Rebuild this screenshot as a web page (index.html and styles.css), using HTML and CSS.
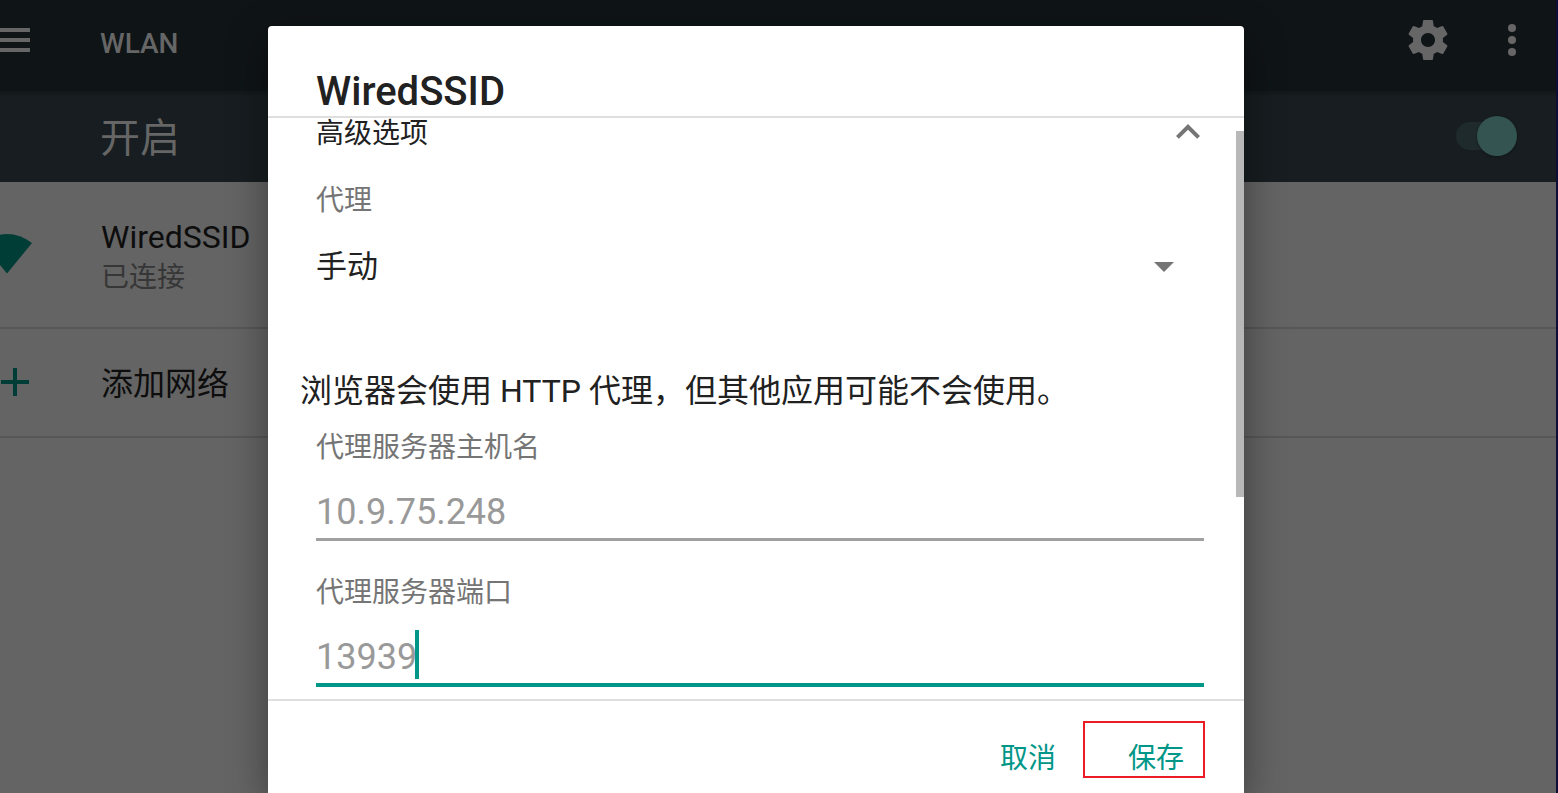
FILE: index.html
```html
<!DOCTYPE html>
<html lang="zh-CN">
<head>
<meta charset="utf-8">
<title>WLAN</title>
<link rel="stylesheet" href="styles.css">
</head>
<body>
<div class="screen">
  <header class="app-bar">
    <button class="icon-button menu" type="button" aria-label="菜单">
      <svg width="30" height="24" viewBox="0 0 30 24"><path d="M0 0h30v4H0zM0 10h30v4H0zM0 20h30v4H0z"/></svg>
    </button>
    <h1 class="app-title">WLAN</h1>
    <button class="icon-button" type="button" aria-label="设置">
      <svg width="48" height="48" viewBox="0 0 24 24"><path d="M19.43 12.98c.04-.32.07-.64.07-.98s-.03-.66-.07-.98l2.11-1.65c.19-.15.24-.42.12-.64l-2-3.46c-.12-.22-.39-.3-.61-.22l-2.49 1c-.52-.4-1.08-.73-1.69-.98l-.38-2.65C14.46 2.18 14.25 2 14 2h-4c-.25 0-.46.18-.49.42l-.38 2.65c-.61.25-1.17.59-1.69.98l-2.49-1c-.23-.09-.49 0-.61.22l-2 3.46c-.13.22-.07.49.12.64l2.11 1.65c-.04.32-.07.65-.07.98s.03.66.07.98l-2.11 1.65c-.19.15-.24.42-.12.64l2 3.46c.12.22.39.3.61.22l2.49-1c.52.4 1.08.73 1.69.98l.38 2.65c.03.24.24.42.49.42h4c.25 0 .46-.18.49-.42l.38-2.65c.61-.25 1.17-.59 1.69-.98l2.49 1c.23.09.49 0 .61-.22l2-3.46c.12-.22.07-.49-.12-.64l-2.11-1.65zM12 15.5c-1.93 0-3.5-1.57-3.5-3.5s1.57-3.5 3.5-3.5 3.5 1.57 3.5 3.5-1.57 3.5-3.5 3.5z"/></svg>
    </button>
    <button class="icon-button" type="button" aria-label="更多选项">
      <svg width="48" height="48" viewBox="0 0 24 24"><circle cx="12" cy="6" r="2"/><circle cx="12" cy="12" r="2"/><circle cx="12" cy="18" r="2"/></svg>
    </button>
  </header>
  <div class="switch-bar">
    <label class="switch-label" for="wlan-switch">开启</label>
    <input class="switch" id="wlan-switch" type="checkbox" checked>
  </div>
  <ul class="networks">
    <li class="network connected">
      <span class="network-icon">
        <svg width="32" height="44" viewBox="0 0 32 44"><path d="M7 39.500L-18 9Q-6 0 7 0T32 9z"/></svg>
      </span>
      <span class="network-text">
        <span class="network-name">WiredSSID</span>
        <span class="network-state">已连接</span>
      </span>
    </li>
    <li class="network">
      <span class="network-icon">
        <svg width="29" height="28" viewBox="0 0 29 28"><path d="M13 0h4v12h12v4H17v12h-4V16H1v-4h12z"/></svg>
      </span>
      <span class="network-text"><span class="network-name">添加网络</span></span>
    </li>
  </ul>
</div>

<div class="overlay">
  <form class="dialog" role="dialog" aria-labelledby="dialog-title">
    <h2 class="dialog-title" id="dialog-title">WiredSSID</h2>
    <div class="dialog-body">
      <button class="advanced" type="button" aria-expanded="true">
        高级选项
        <svg class="chevron" width="24" height="20" viewBox="6 8 12 10"><path d="M12 8l-6 6 1.410 1.410L12 10.830l4.590 4.580L18 14z"/></svg>
      </button>
      <div class="field proxy-field">
        <label class="field-label" for="proxy">代理</label>
        <div class="select-wrap">
          <select class="select" id="proxy"><option>手动</option></select>
          <svg class="arrow" width="20" height="10" viewBox="0 0 20 10"><path d="M0 0h20L10 10z"/></svg>
        </div>
      </div>
      <p class="notice">浏览器会使用 HTTP 代理，但其他应用可能不会使用。</p>
      <div class="field">
        <label class="field-label" for="host">代理服务器主机名</label>
        <input class="text-input" id="host" type="text" value="10.9.75.248">
      </div>
      <div class="field">
        <label class="field-label" for="port">代理服务器端口</label>
        <div class="input-wrap">
          <input class="text-input active" id="port" type="text" value="13939">
          <span class="caret"></span>
        </div>
      </div>
      <span class="scroll-thumb"></span>
    </div>
    <footer class="actions">
      <button class="action" type="button">取消</button>
      <span class="highlighted"><button class="action" type="submit">保存</button></span>
    </footer>
  </form>
</div>
</body>
</html>
```
FILE: styles.css
```css
* { box-sizing: border-box; }

body {
  margin: 0;
  min-height: 100vh;
  overflow: hidden;
  background: #646464;
  color: #0d0d0d;
  font-family: Roboto, "Noto Sans CJK SC", sans-serif;
}

button, input, select {
  margin: 0;
  padding: 0;
  border: 0;
  outline: 0;
  background: none;
  color: inherit;
  font: inherit;
}

svg { display: block; }

.screen {
  min-height: 100vh;
  border-right: 2px solid #0f0d33;
}

.app-bar {
  display: flex;
  align-items: center;
  gap: 36px;
  height: 91px;
  padding: 0 20px 11px 0;
  background: #0f1416;
  color: #666;
}

.icon-button svg { fill: #666; }

.app-title {
  flex: 1;
  margin: 0;
  padding: 7px 0 0 34px;
  font-size: 28px;
  font-weight: 500;
  line-height: 32px;
}

.switch-bar {
  display: flex;
  align-items: center;
  justify-content: space-between;
  height: 91px;
  padding: 0 39px 2px 100px;
  background: linear-gradient(#12181a, #171d20 6px);
}

.switch-label {
  padding-top: 6px;
  color: #666;
  font-size: 40px;
  line-height: 48px;
}

.switch {
  position: relative;
  width: 61px;
  height: 40px;
  appearance: none;
}

.switch::before {
  content: "";
  position: absolute;
  inset: 6px 6px 6px 0;
  border-radius: 14px;
  background: #1e2a2c;
}

.switch::after {
  content: "";
  position: absolute;
  top: 0;
  right: 0;
  width: 40px;
  height: 40px;
  border-radius: 50%;
  background: #335450;
  box-shadow: 0 1px 3px rgba(0, 0, 0, 0.3);
}

.networks {
  margin: 0;
  padding: 0;
  list-style: none;
}

.network {
  display: flex;
  align-items: center;
  padding: 35px 0 32px;
  border-bottom: 2px solid #575757;
}

.network.connected { padding-bottom: 28px; }

.network-icon {
  width: 101px;
  padding-bottom: 4px;
}

.network-icon svg { fill: #003d36; }

.network-text {
  display: flex;
  flex-direction: column;
  line-height: 40px;
}

.network-name { font-size: 32px; }

.network-state {
  color: #363636;
  font-size: 28px;
  line-height: 42px;
}

.overlay {
  position: absolute;
  inset: 0;
  display: flex;
  padding: 26px 314px 0 268px;
}

.dialog {
  display: flex;
  flex: 1;
  flex-direction: column;
  min-width: 0;
  border-radius: 4px 4px 0 0;
  background: #fff;
  box-shadow: 0 12px 40px rgba(0, 0, 0, 0.4);
  color: #212121;
}

.dialog-title {
  margin: 0;
  padding: 42px 48px 0;
  border-bottom: 2px solid #dfdfdf;
  font-size: 40px;
  font-weight: 500;
  line-height: 48px;
}

.dialog-body {
  position: relative;
  display: flex;
  flex-direction: column;
  padding: 0 40px 12px 48px;
  border-bottom: 2px solid #dfdfdf;
}

.advanced {
  display: flex;
  align-items: center;
  justify-content: space-between;
  padding-right: 4px;
  font-size: 28px;
  line-height: 32px;
}

.chevron { fill: #757575; }

.field {
  display: flex;
  flex-direction: column;
  gap: 24px;
  padding-top: 36px;
}

.proxy-field {
  gap: 26px;
  padding-top: 35px;
}

.field-label {
  color: #757575;
  font-size: 28px;
  line-height: 32px;
}

.select-wrap {
  position: relative;
  display: flex;
}

.select {
  flex: 1;
  height: 48px;
  appearance: none;
  font-size: 31px;
  line-height: 48px;
}

.arrow {
  position: absolute;
  top: 19px;
  right: 30px;
  fill: #757575;
  pointer-events: none;
}

.notice {
  margin: 80px 0 -15px -16px;
  font-size: 32px;
  line-height: 40px;
}

.input-wrap {
  position: relative;
  display: flex;
}

.text-input {
  width: 100%;
  height: 53px;
  padding-bottom: 2px;
  border-bottom: 3px solid #a0a0a0;
  color: #999;
  font-size: 36px;
  line-height: 48px;
}

.text-input.active {
  height: 54px;
  border-bottom: 4px solid #009688;
}

.caret {
  position: absolute;
  top: -3px;
  left: 99px;
  width: 4px;
  height: 49px;
  background: #009688;
}

.scroll-thumb {
  position: absolute;
  top: 13px;
  right: 0;
  width: 8px;
  height: 366px;
  background: #b8b8b8;
}

.actions {
  display: flex;
  justify-content: flex-end;
  gap: 32px;
  padding: 34px 40px 0;
}

.action {
  padding: 0 20px;
  color: #009688;
  font-size: 28px;
  line-height: 48px;
}

.highlighted { position: relative; }

.highlighted::after {
  content: "";
  position: absolute;
  inset: -14px -1px 5px -25px;
  border: 2px solid #ec1c24;
  pointer-events: none;
}
```
